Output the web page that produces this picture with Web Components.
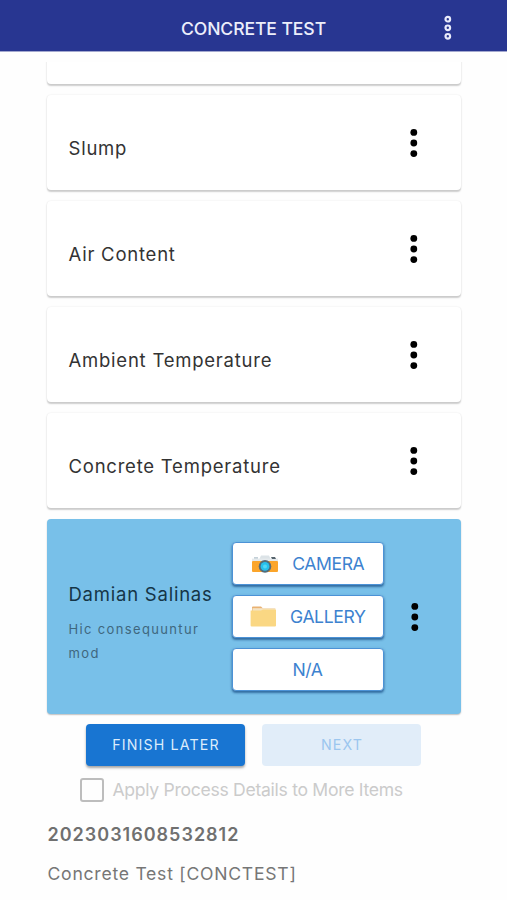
<!DOCTYPE html>
<html lang="en">
<head>
<meta charset="utf-8">
<title>Concrete Test</title>
<style>
html,body{margin:0;background:#fefefe;height:900px;overflow:hidden}
body{font-family:Inter,"Liberation Sans",sans-serif}
</style>
</head>
<body>
<test-app></test-app>
<script>
const define = (name, html) => customElements.define(name, class extends HTMLElement {
  constructor() {
    super();
    const t = document.createElement('template');
    t.innerHTML = html;
    this.attachShadow({ mode: 'open' }).append(t.content.cloneNode(true));
  }
});

define('more-dots', `
<style>
:host{display:block;width:10px;height:30px}
svg{display:block}
</style>
<svg width="10" height="30" viewBox="0 0 10 30" fill="#000"><circle cx="4.8" cy="4.4" r="3.4"/><circle cx="4.8" cy="15" r="3.4"/><circle cx="4.8" cy="25.6" r="3.4"/></svg>`);

define('app-header', `
<style>
:host{display:grid;grid-template-columns:1fr auto 1fr;align-items:center;background:#283691;border-bottom:1px solid #a3a8cf;color:#eceefb;box-sizing:border-box;height:52px;padding-top:5px}
.title{grid-column:2;font-size:17.6px;font-weight:500;letter-spacing:-.1px;white-space:nowrap}
svg{display:block;justify-self:end;margin-right:54px}
</style>
<span class="title"><slot></slot></span>
<svg width="10" height="28" viewBox="0 0 10 28" fill="none" stroke="#e9ebfb" stroke-width="2.2"><circle cx="4.8" cy="5.2" r="2.3"/><circle cx="4.8" cy="13.8" r="2.3"/><circle cx="4.8" cy="22.3" r="2.3"/></svg>`);

define('test-card', `
<style>
:host{display:flex;align-items:center;justify-content:space-between;box-sizing:border-box;height:95px;padding:0 42px 0 21.5px;border-radius:4px;background:#fff;box-shadow:0 1.5px 1.5px rgba(0,0,0,.19),0 0 2px rgba(0,0,0,.08)}
.name{font-size:18.5px;line-height:24px;letter-spacing:.77px;color:#333;padding-top:10px;white-space:nowrap}
</style>
<span class="name"><slot></slot></span><more-dots></more-dots>`);

define('action-button', `
<style>
:host{display:flex;align-items:center;justify-content:center;box-sizing:border-box;width:152px;height:43px;border-radius:4px;background:#fff;border:1px solid #4c92d6;box-shadow:0 2px 2px rgba(10,60,120,.5),0 1px 3px rgba(10,60,120,.3);color:#3d82cf;font-size:17.6px;letter-spacing:-.4px;white-space:nowrap}
::slotted(svg){display:block;margin-right:13.5px}
</style>
<slot name="icon"></slot><span><slot></slot></span>`);

define('active-card', `
<style>
:host{display:grid;grid-template-columns:163px 152px 10px;column-gap:0;align-items:center;box-sizing:border-box;height:195px;padding-left:21.5px;border-radius:4px;background:#78c0e9;box-shadow:0 1px 1.5px rgba(0,0,0,.25)}
.name{font-size:18.5px;line-height:24px;letter-spacing:.77px;color:#153547;white-space:nowrap}
.note{font-size:13px;line-height:24px;letter-spacing:1.35px;color:#3f677e;width:140px;margin-top:11px}
.text{padding-top:13px}
.actions{display:grid;row-gap:10px}
more-dots{margin-left:26px}
</style>
<div class="text"><div class="name"><slot></slot></div><div class="note"><slot name="note"></slot></div></div>
<div class="actions"><slot name="action"></slot></div>
<more-dots></more-dots>`);

define('flow-button', `
<style>
:host{display:flex;align-items:center;justify-content:center;box-sizing:border-box;width:159px;height:42px;border-radius:4px;background:#1875d2;color:#dcecfb;font-size:14.2px;letter-spacing:1.15px;padding:0 0 2px 1px;box-shadow:0 2px 2.5px rgba(0,0,0,.35)}
:host([disabled]){background:#e1edf9;color:#9bc6ef;box-shadow:none}
</style><span><slot></slot></span>`);

define('check-row', `
<style>
:host{display:flex;align-items:center;color:#cbcbcb;font-size:17.6px;letter-spacing:-.3px;white-space:nowrap;height:24px}
i{box-sizing:border-box;width:24px;height:24px;border:2px solid #bdbdbd;border-radius:3px;margin-right:8.5px}
span{padding-bottom:1px}
</style><i></i><span><slot></slot></span>`);

define('record-info', `
<style>
:host{display:block;color:#767676;letter-spacing:1px;white-space:nowrap}
.id{font-size:18px;line-height:24px;font-weight:600;color:#707070}
.desc{font-size:17.6px;line-height:24px;margin-top:15px;letter-spacing:.74px}
</style><div class="id"><slot name="id"></slot></div><div class="desc"><slot></slot></div>`);

define('test-app', `
<style>
:host{display:flex;flex-direction:column;height:900px}
.clip{height:26px;overflow:hidden;margin-top:10px;padding:0 4px;width:414px;margin-left:43px;display:flex;align-items:flex-end;box-sizing:content-box}
.clip test-card{width:414px;flex:none;margin-bottom:4px}
.list{display:grid;row-gap:11px;width:414px;margin:7px 0 0 47px}
.buttons{display:flex;gap:17px;margin:10px 0 0 86px}
check-row{margin:12px 0 0 80px}
record-info{margin:21px 0 0 47.5px}
</style>
<app-header>CONCRETE TEST</app-header>
<div class="clip"><test-card></test-card></div>
<div class="list">
<test-card>Slump</test-card>
<test-card>Air Content</test-card>
<test-card>Ambient Temperature</test-card>
<test-card>Concrete Temperature</test-card>
<active-card>Damian Salinas<span slot="note">Hic consequuntur mod</span>
<action-button slot="action"><svg slot="icon" width="28" height="20" viewBox="0 0 28 20"><path d="M3 5V3h4v2" fill="#c4d0d8"/><path d="M8 6 10 1.5h8l2 4.5z" fill="#dce3e7"/><rect x="1" y="4.6" width="26" height="3" fill="#e5eaed"/><path d="M20 3h4l1 2h-4z" fill="#55636c"/><rect x="1" y="7" width="26" height="11" rx="1" fill="#fba52b"/><circle cx="14" cy="12.4" r="6.3" fill="#546b7a"/><circle cx="14" cy="12.4" r="4.4" fill="#27c1ed"/><circle cx="14" cy="12.4" r="2" fill="#55d7f6"/></svg>CAMERA</action-button>
<action-button slot="action"><svg slot="icon" width="27" height="22" viewBox="0 0 27 22"><path d="M2 1.2Q2 .4 3 .4h8l2 2h12v4H2z" fill="#e9b273"/><path d="M2.5 2.2h23V8h-23z" fill="#f5e4c5"/><path d="M.6 4.4H11l2-1h12.5q.5 0 .5.8V19.500q0 1-1 1H1.600q-1 0-1-1z" fill="#fad783"/></svg>GALLERY</action-button>
<action-button slot="action">N/A</action-button>
</active-card>
</div>
<div class="buttons"><flow-button>FINISH LATER</flow-button><flow-button disabled>NEXT</flow-button></div>
<check-row>Apply Process Details to More Items</check-row>
<record-info><span slot="id">2023031608532812</span>Concrete Test [CONCTEST]</record-info>`);
</script>
</body>
</html>
